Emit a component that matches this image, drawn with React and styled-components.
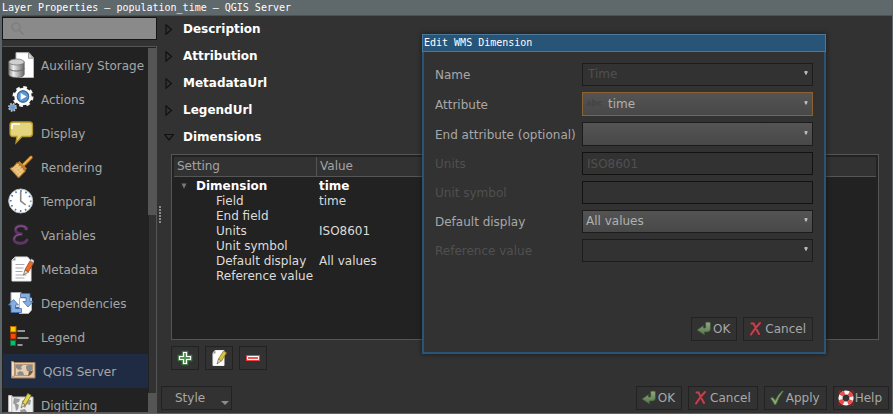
import React from "react";
import styled, { createGlobalStyle, css } from "styled-components";

const Global = createGlobalStyle`
  *, *::before, *::after { box-sizing: border-box; }
  body {
    margin: 0;
    background: #323232;
    color: #a4a4a4;
    font: 12px/15px "DejaVu Sans", sans-serif;
  }
  button, input, select { font: inherit; color: inherit; margin: 0; }
`;

const Window = styled.div`
  position: relative;
  display: flex;
  flex-direction: column;
  height: 100vh;
  min-height: 320px;
  overflow: hidden;
  border: solid #5c6669;
  border-width: 0 1px 1px 2px;
  background: #323232;
`;

const TitleBar = styled.header`
  flex: none;
  height: 16px;
  margin-left: -2px;
  padding-left: 2px;
  background: #5f686b;
  border-bottom: 1px solid #4a5254;
  color: #fff;
  font: 10px/15px "DejaVu Sans Mono", monospace;
  white-space: pre;
`;

const Body = styled.div`
  flex: 1;
  display: flex;
  min-height: 0;
`;

const Sidebar = styled.aside`
  flex: none;
  display: flex;
  flex-direction: column;
  gap: 6px;
  width: 155px;
  padding-top: 1px;
`;

const Search = styled.label`
  flex: none;
  display: flex;
  align-items: center;
  height: 23px;
  padding-left: 8px;
  border: 1px solid #151515;
  background: #8a8a8a;
  input {
    flex: 1;
    min-width: 0;
    padding: 0 4px;
    border: 0;
    outline: 0;
    background: transparent;
    color: #222;
  }
`;

const ListFrame = styled.div`
  flex: 1;
  display: flex;
  min-height: 0;
  padding-top: 1px;
  border: 1px solid #555;
  border-left-color: #222;
  background: #222;
`;

const NavList = styled.nav`
  flex: 1;
  overflow-y: auto;
  scrollbar-width: none;
`;

const NavItem = styled.a`
  display: flex;
  align-items: center;
  gap: 7px;
  height: 34px;
  padding-left: ${(p) => (p.$active ? 7 : 5)}px;
  background: ${(p) => (p.$active ? "#1f2b43" : "transparent")};
  color: #a6a6a6;
  text-decoration: none;
  white-space: nowrap;
  svg { flex: none; }
`;

const Caption = styled.span`
  padding-top: 2px;
`;

const ScrollTrack = styled.div`
  flex: none;
  display: flex;
  flex-direction: column;
  justify-content: space-between;
  width: 8px;
  background: #323232;
  border-left: 1px solid #222;
`;

const ScrollThumb = styled.div`
  height: ${(p) => (p.$end ? "19px" : "46%")};
  margin-left: -1px;
  background: #555;
`;

const Splitter = styled.div`
  flex: none;
  align-self: stretch;
  display: grid;
  place-items: center;
  width: 6px;
`;

const Main = styled.main`
  flex: 1;
  display: flex;
  flex-direction: column;
  min-width: 0;
  padding: 0 3px 3px 0;
`;

const Group = styled.button`
  flex: none;
  display: flex;
  align-items: center;
  gap: 9px;
  height: 27px;
  padding: 0 0 0 1px;
  border: 0;
  background: none;
  color: #fff;
  font-weight: bold;
  text-align: left;
`;

const DimensionPanel = styled.section`
  flex: 1;
  display: flex;
  flex-direction: column;
  gap: 6px;
  min-height: 0;
  padding: 3px 10px 16px 8px;
`;

const TableFrame = styled.div`
  flex: 1;
  min-height: 0;
  overflow: hidden;
  padding: 2px;
  border: 1px solid #555;
  background: #222;
`;

const Table = styled.table`
  width: 100%;
  border-collapse: separate;
  border-spacing: 0;
  table-layout: fixed;
  color: #dcdcdc;
  th {
    height: 20px;
    padding: 0 3px;
    border-bottom: 1px solid #555;
    background: #323232;
    color: #a4a4a4;
    font-weight: normal;
    text-align: left;
  }
  th + th { border-left: 1px solid #555; }
  th:first-child { width: 142px; }
  tbody::before { content: ""; display: block; height: 2px; }
`;

const Cell = styled.td`
  height: 15px;
  padding: 0 0 0 ${(p) => (p.$level ? 42 : 3)}px;
  white-space: nowrap;
  ${(p) => p.$bold && css`color: #fff; font-weight: bold;`}
  svg { margin: 0 9px 2px 4px; vertical-align: middle; }
`;

const ButtonRow = styled.div`
  flex: none;
  display: flex;
  gap: 6px;
  justify-content: ${(p) => (p.$end ? "flex-end" : "flex-start")};
`;

const Footer = styled.footer`
  flex: none;
  display: flex;
  justify-content: space-between;
`;

const Button = styled.button`
  display: flex;
  align-items: center;
  justify-content: center;
  gap: 1px;
  height: 24px;
  padding: 0 6px 0 4px;
  border: 1px solid #222;
  background: #323232;
  color: #a8a8a8;
  white-space: nowrap;
  svg { flex: none; }
`;

const ToolButton = styled(Button)`
  width: 28px;
  padding: 0;
`;

const StyleButton = styled(Button)`
  justify-content: space-between;
  width: 71px;
  margin-left: -2px;
  padding: 0 2px 0 13px;
  svg { align-self: flex-end; margin-bottom: 4px; }
`;

const Dialog = styled.section`
  position: absolute;
  top: 34px;
  left: 420px;
  width: 404px;
  border: 2px solid #285577;
  border-top: 0;
  background: #323232;
  box-shadow: 0 0 5px rgba(0, 0, 0, 0.5);
`;

const DialogTitle = styled.h1`
  height: 18px;
  margin: 0 -2px;
  padding-left: 1px;
  border: 1px solid #4c7899;
  background: #285577;
  color: #fff;
  font: 10px/15px "DejaVu Sans Mono", monospace;
`;

const Form = styled.form`
  display: flex;
  flex-direction: column;
  gap: 6px;
  padding: 11px;
`;

const Field = styled.label`
  display: grid;
  grid-template-columns: 147px 1fr;
  align-items: center;
  height: ${(p) => (p.$tall ? 24 : 23)}px;
  color: ${(p) => (p.$dim ? "#505050" : "#a8a8a8")};
  white-space: nowrap;
`;

const SelectBox = styled.span`
  display: grid;
  align-items: center;
  height: 100%;
  color: ${(p) => (p.$dim ? "#505050" : "#b0b0b0")};
  > * { grid-area: 1 / 1; }
  > svg { pointer-events: none; }
`;

const Select = styled.select`
  appearance: none;
  width: 100%;
  height: 100%;
  padding: 0 16px 0 ${(p) => (p.$icon ? 25 : p.disabled ? 5 : 3)}px;
  border: 1px solid ${(p) => (p.$focus ? "#8c6230" : "#1c1c1c")};
  border-radius: 0;
  outline: 0;
  background: ${(p) => (p.disabled ? "#323232" : "linear-gradient(#545454, #484848)")};
  opacity: 1;
`;

const TextInput = styled.input`
  width: 100%;
  height: 100%;
  padding: 0 4px;
  border: 1px solid #121212;
  border-radius: 0;
  background: #323232;
`;

const Arrow = styled.svg`
  justify-self: end;
  margin-right: 5px;
  margin-bottom: 3px;
`;

const TypeTag = styled.span`
  justify-self: start;
  margin-left: 4px;
  color: #444;
  font-size: 8px;
  font-weight: bold;
  line-height: 12px;
  pointer-events: none;
`;

const DialogButtons = styled(ButtonRow)`
  padding-top: 49px;
`;

/* ---------- icons ---------- */

const Icon26 = ({ children }) => (
  <svg width="26" height="26" viewBox="0 0 26 26" aria-hidden="true">{children}</svg>
);

const StorageIcon = () => (
  <Icon26>
    <defs>
      <linearGradient id="cyl" x1="0" x2="1">
        <stop offset="0" stopColor="#888" /><stop offset=".3" stopColor="#eee" /><stop offset="1" stopColor="#666" />
      </linearGradient>
    </defs>
    <path d="M8 .7h13l4.500 5v19.800H8z" fill="#fff" stroke="#bbb" />
    <path d="M20.500.7v5.500h5z" fill="#d8d8d8" stroke="#888" strokeWidth=".8" />
    <path d="M.8 10v12.500c0 1.700 3.500 3 7.700 3s7.700-1.300 7.700-3V10z" fill="url(#cyl)" stroke="#666" strokeWidth=".8" />
    <ellipse cx="8.500" cy="10" rx="7.700" ry="3" fill="#cfcfcf" stroke="#777" strokeWidth=".8" />
    <path d="M.8 16c0 1.700 3.500 3 7.700 3s7.700-1.300 7.700-3" fill="none" stroke="#666" />
  </Icon26>
);

const ActionsIcon = () => (
  <Icon26>
    <circle cx="15" cy="10.500" r="9" fill="none" stroke="#f4f4f4" strokeWidth="3" strokeDasharray="3.600 3.468" />
    <circle cx="15" cy="10.500" r="7.500" fill="#5a88bd" stroke="#fff" strokeWidth="2.500" />
    <circle cx="15" cy="10.500" r="5.700" fill="#5d93cf" stroke="#37618f" strokeWidth="1" />
    <path d="M12.700 7v7l5.800-3.500z" fill="#fff" />
    <circle cx="4.500" cy="21.300" r="3.500" fill="none" stroke="#ccc" strokeWidth="1.800" strokeDasharray="1.600 1.150" />
    <circle cx="4.500" cy="21.300" r="2.900" fill="#6a9bd1" stroke="#9bb9da" strokeWidth=".8" />
  </Icon26>
);

const DisplayIcon = () => (
  <Icon26>
    <path d="M5 2h16.500q3 0 3 3v8.500q0 3-3 3H14l-6 6.300.9-6.300H5q-3 0-3-3V5q0-3 3-3z" fill="#e2d57e" stroke="#b3962d" strokeWidth="1.300" />
    <path d="M4 9V5.500Q4 4 5.500 4H12" fill="none" stroke="#fff" strokeWidth="1.500" />
  </Icon26>
);

const RenderingIcon = () => (
  <Icon26>
    <path d="M23 3.500L13.500 13" stroke="#a9681a" strokeWidth="3.600" strokeLinecap="round" />
    <path d="M23 3.300L14 12.300" stroke="#f0b24c" strokeWidth="2" strokeLinecap="round" />
    <path d="M9 8.500l8.500 8.500-7 7L2 14.500q4-1 7-6z" fill="#e3b263" stroke="#a9691e" />
    <path d="M10.500 8l7.500 7.500" stroke="#c07d29" strokeWidth="2.600" />
    <path d="M4 15l7-5M6 17l7-5M8 19.500l7-5M10 22l5-5M6 14l7 7M8.500 12l6 6" stroke="#f4d59b" strokeWidth=".8" />
  </Icon26>
);

const TemporalIcon = () => (
  <Icon26>
    <circle cx="12.700" cy="13" r="12" fill="#fff" stroke="#bdbdbd" strokeWidth="1" />
    <circle cx="12.700" cy="13" r="10" fill="none" stroke="#4c7dae" strokeWidth="1.800" strokeDasharray="1.600 3.636" strokeDashoffset=".8" />
    <path d="M12.700 3.500V13l5 4" fill="none" stroke="#858585" strokeWidth="1.600" />
  </Icon26>
);

const VariablesIcon = () => (
  <Icon26>
    <g fill="none" strokeLinecap="round">
      <path d="M18.500 6.500C17 3 8 2.500 7.500 7.500c0 3 3 4.500 7 4.500-5 0-8.500 2-8.500 5 0 5.500 10.500 5.500 13 1" stroke="#603566" strokeWidth="2.800" />
      <path d="M18.500 6C16 3 8 3.500 7.500 7M6 17c.5-3 3-4.500 7-4.700" stroke="#93649a" strokeWidth=".8" />
      <circle cx="18" cy="7" r="1" fill="#704477" stroke="#704477" />
    </g>
  </Icon26>
);

const MetadataIcon = () => (
  <Icon26>
    <path d="M7 1h12.500l3.500 4v20H4V4z" fill="#fff" stroke="#e4e4e4" />
    <path d="M4 4.500L7.500 1v3.500z" fill="#999" />
    <path d="M7.500 8.500h9M7.500 12h8M7.500 15.500h7M7.500 19h11M7.500 22h9" stroke="#aaa" strokeWidth="1" />
    <path d="M15.500 19l1.400-5 3.700 2.200z" fill="#efdcb0" stroke="#444" strokeWidth=".6" />
    <path d="M17 13.600L22 5l3.500 2.200-5 8.600z" fill="#e96d2c" stroke="#a74314" strokeWidth=".8" />
    <path d="M22 5l1.300-2.200 3.200 2-1 2.200z" fill="#ddd" stroke="#777" strokeWidth=".5" />
  </Icon26>
);

const DependenciesIcon = () => (
  <Icon26>
    <path d="M3 2.500h10l2 2V17H3z" fill="#fff" stroke="#aaa" />
    <path d="M11.500 8h12v12l-3 3.500h-9z" fill="#fff" stroke="#bbb" />
    <path d="M12.500 3.500H22v8h3l-5 5.500-5-5.500h3V7.500h-5.500z" fill="#86aee2" stroke="#3f6fae" strokeWidth=".8" />
    <path d="M13.500 22.500H3V15H.5l5-5.500 5 5.500H7.500v3.500h6z" fill="#86aee2" stroke="#3f6fae" strokeWidth=".8" />
  </Icon26>
);

const LegendIcon = () => (
  <Icon26>
    <rect x="2.500" y="2.500" width="5.500" height="5.500" fill="#fcd000" stroke="#b96b00" />
    <rect x="2.500" y="9.500" width="5.500" height="5.500" fill="#fb4b09" stroke="#a12500" />
    <rect x="2.500" y="16.500" width="5" height="5" fill="#0bbd68" stroke="#087340" />
    <path d="M9.500 7h7.500M9.500 14h11M9.500 21h5" stroke="#969696" strokeWidth="2" />
  </Icon26>
);

const ServerIcon = () => (
  <Icon26>
    <path d="M1.500 3.500l2 1H25v15.500H1.500z" fill="#e3c5a3" stroke="#9d7c5a" />
    <path d="M1.500 3.500q2-1 3 1.500V18q-2-.5-3 2z" fill="#f0dcc3" stroke="#a58360" strokeWidth=".8" />
    <path d="M5.500 6.500h17v6l-3.500 5H5.500z" fill="#e9cdac" stroke="#a58a6e" strokeWidth=".8" />
    <path d="M6 7h7l-2 2 1 2-3 1-3-2zM16 8l2-1h4v5l-2 2-3-1-1-3zM7 15l3-2 3 1 1 3H8z" fill="#888c8e" />
    <path d="M18 18l1-4.500 4-.8q-1 4-5 5.300z" fill="#73583f" />
  </Icon26>
);

const DigitizingIcon = () => (
  <Icon26>
    <path d="M.7 3.500h3l1 1.500H25v20H.7z" fill="#ededed" stroke="#bbb" />
    <path d="M.7 3.500h3V20h-3z" fill="#fff" stroke="#aaa" strokeWidth=".7" />
    <path d="M6 6l6 1-1 3-3 1 3 2-1 4-2 2-1-6-2-2zM14 9l4-2 5 1-1 5-3-1-2 4-3-3zM12 18l5-1 2 3-6 1z" fill="#9b9b9b" />
    <path d="M13 16l1.500-5 3 1.700z" fill="#efe2b8" stroke="#555" strokeWidth=".6" />
    <path d="M14.500 11L19.800 1.500l3.200 1.800-5.400 9.500z" fill="#e6d94d" stroke="#8c8232" strokeWidth=".9" />
  </Icon26>
);

const Icon16 = ({ children }) => (
  <svg width="16" height="16" viewBox="0 0 16 16" aria-hidden="true">{children}</svg>
);

const OkIcon = () => (
  <Icon16>
    <defs>
      <linearGradient id="ok" x1="0" y1="0" x2="0" y2="1">
        <stop offset="0" stopColor="#93a982" /><stop offset="1" stopColor="#54764b" />
      </linearGradient>
    </defs>
    <path d="M9.500 1.500Q12 .3 14.500 1.500V8q0 2.700-3 3H8.500V14L1 9l6.500-4.500V7h1.500q.7 0 .7-1z" fill="url(#ok)" stroke="#3e5438" strokeWidth=".8" />
  </Icon16>
);

const CancelIcon = () => (
  <Icon16>
    <path d="M4 2.500h1.500Q8 7.500 11 13M12 2Q7.500 6.500 3 13.500" fill="none" stroke="#5a2227" strokeWidth="3.400" strokeLinecap="round" />
    <path d="M3.500 2.500h2Q8 7.500 11 13M12 2Q7.500 6.500 3 13.500" fill="none" stroke="#b94550" strokeWidth="2" strokeLinecap="round" />
  </Icon16>
);

const ApplyIcon = () => (
  <Icon16>
    <path d="M1.500 8.500l2.200-1.300 2.500 3.300Q8.500 5 13.500.8l.7.500Q9.500 7 7 14.500H5.500Q4 11 1.500 8.500z" fill="#88ac71" stroke="#496840" strokeWidth=".9" />
  </Icon16>
);

const HelpIcon = () => (
  <Icon16>
    <path d="M1 4V1h3M12 1h3v3M15 12v3h-3M4 15H1v-3" fill="none" stroke="#a31919" strokeWidth="1.200" />
    <circle cx="8" cy="8" r="5.500" fill="none" stroke="#f4f4f4" strokeWidth="4.200" />
    <circle cx="8" cy="8" r="5.500" fill="none" stroke="#ea4b4b" strokeWidth="4.200" strokeDasharray="4.320 4.320" strokeDashoffset="-2.160" />
  </Icon16>
);

const AddIcon = () => (
  <Icon16>
    <path d="M6 2h4v4h4v4h-4v4H6v-4H2V6h4z" fill="#4e8e50" stroke="#3f7d42" strokeWidth="2.600" />
    <path d="M6.500 2.500h3v4h4v3h-4v4h-3v-4h-4v-3h4z" fill="#529254" stroke="#fff" strokeWidth="1.200" />
  </Icon16>
);

const EditIcon = () => (
  <Icon16>
    <path d="M4 .5h9v15H2V3z" fill="#fff" stroke="#eee" />
    <path d="M1.500 3.500l3-3v3z" fill="#999" />
    <path d="M6 14l1.500-5 3 1.700z" fill="#eee0b8" stroke="#444" strokeWidth=".6" />
    <path d="M7.500 9l5-8 3 1.800-5 8.200z" fill="#d9c342" stroke="#8b7c2c" strokeWidth=".8" />
  </Icon16>
);

const RemoveIcon = () => (
  <Icon16>
    <path d="M1 5h14v6H1z" fill="#ec4040" />
    <path d="M2.500 6.500h11v3h-11z" fill="#e85858" stroke="#fff" />
  </Icon16>
);

const SearchIcon = () => (
  <svg width="13" height="13" viewBox="0 0 13 13" fill="none" stroke="#7c7c7c" strokeWidth="1.200" aria-hidden="true">
    <circle cx="5" cy="5" r="4" /><path d="M8 8l4.500 4.500" />
  </svg>
);

const Expander = ({ open }) => (
  <svg width="10" height="11" viewBox="0 0 10 11" fill="none" stroke="#111" aria-hidden="true">
    <path d={open ? "M.5 2.500h9L5 8z" : "M2 .8v9.400L7.500 5.500z"} strokeWidth="1.200" />
  </svg>
);

const ComboArrow = () => (
  <Arrow width="4" height="4" viewBox="0 0 4 4" aria-hidden="true">
    <path d="M0 0h4v2H0z" fill="#7c7c7c" />
    <path d="M1 0h2v3H1z" fill="#b8b8b8" />
    <path d="M1 3h2v1H1z" fill="#777" />
  </Arrow>
);

/* ---------- content ---------- */

const NAV = [
  ["Auxiliary Storage", StorageIcon],
  ["Actions", ActionsIcon],
  ["Display", DisplayIcon],
  ["Rendering", RenderingIcon],
  ["Temporal", TemporalIcon],
  ["Variables", VariablesIcon],
  ["Metadata", MetadataIcon],
  ["Dependencies", DependenciesIcon],
  ["Legend", LegendIcon],
  ["QGIS Server", ServerIcon],
  ["Digitizing", DigitizingIcon],
];

const GROUPS = ["Description", "Attribution", "MetadataUrl", "LegendUrl", "Dimensions"];

const SETTINGS = [
  ["Field", "time"],
  ["End field", ""],
  ["Units", "ISO8601"],
  ["Unit symbol", ""],
  ["Default display", "All values"],
  ["Reference value", ""],
];

function Combo({ label, value, disabled, dimLabel, focus, tall, tag }) {
  return (
    <Field $tall={tall} $dim={dimLabel}>
      <Caption>{label}</Caption>
      <SelectBox $dim={disabled}>
        <Select disabled={disabled} $focus={focus} $icon={!!tag} defaultValue={value}>
          <option>{value}</option>
        </Select>
        {tag && <TypeTag>{tag}</TypeTag>}
        <ComboArrow />
      </SelectBox>
    </Field>
  );
}

function TextField({ label, value }) {
  return (
    <Field $dim>
      <Caption>{label}</Caption>
      <TextInput disabled defaultValue={value} />
    </Field>
  );
}

export default function App() {
  return (
    <>
      <Global />
      <Window>
        <TitleBar>Layer Properties — population_time — QGIS Server</TitleBar>
        <Body>
          <Sidebar>
            <Search>
              <SearchIcon />
              <input type="text" aria-label="Search" />
            </Search>
            <ListFrame>
              <NavList>
                {NAV.map(([name, Icon]) => (
                  <NavItem key={name} href="#" $active={name === "QGIS Server"}>
                    <Icon />
                    <Caption>{name}</Caption>
                  </NavItem>
                ))}
              </NavList>
              <ScrollTrack>
                <ScrollThumb />
                <ScrollThumb $end />
              </ScrollTrack>
            </ListFrame>
          </Sidebar>
          <Splitter>
            <svg width="2" height="17" viewBox="0 0 2 17" aria-hidden="true">
              <path d="M1 0v17" stroke="#8c8c8c" strokeWidth="2" strokeDasharray="2 1" />
            </svg>
          </Splitter>
          <Main>
            {GROUPS.map((name) => (
              <Group key={name} type="button" aria-expanded={name === "Dimensions"}>
                <Expander open={name === "Dimensions"} />
                {name}
              </Group>
            ))}
            <DimensionPanel>
              <TableFrame>
                <Table>
                  <thead>
                    <tr><th>Setting</th><th>Value</th></tr>
                  </thead>
                  <tbody>
                    <tr>
                      <Cell $bold>
                        <svg width="6" height="6" viewBox="0 0 6 6" aria-hidden="true">
                          <path d="M.5.5h5L3 5.800z" fill="#777" />
                        </svg>
                        Dimension
                      </Cell>
                      <Cell $bold>time</Cell>
                    </tr>
                    {SETTINGS.map(([name, value]) => (
                      <tr key={name}>
                        <Cell $level={1}>{name}</Cell>
                        <Cell>{value}</Cell>
                      </tr>
                    ))}
                  </tbody>
                </Table>
              </TableFrame>
              <ButtonRow>
                <ToolButton type="button" aria-label="Add dimension"><AddIcon /></ToolButton>
                <ToolButton type="button" aria-label="Edit dimension"><EditIcon /></ToolButton>
                <ToolButton type="button" aria-label="Remove dimension"><RemoveIcon /></ToolButton>
              </ButtonRow>
            </DimensionPanel>
            <Footer>
              <StyleButton type="button">
                Style
                <svg width="8" height="4" viewBox="0 0 8 4" aria-hidden="true">
                  <path d="M0 0h8L4 4z" fill="#8c8c8c" />
                </svg>
              </StyleButton>
              <ButtonRow $end>
                <Button type="button"><OkIcon />OK</Button>
                <Button type="button"><CancelIcon />Cancel</Button>
                <Button type="button"><ApplyIcon />Apply</Button>
                <Button type="button"><HelpIcon />Help</Button>
              </ButtonRow>
            </Footer>
          </Main>
        </Body>

        <Dialog role="dialog" aria-labelledby="dialog-title">
          <DialogTitle id="dialog-title">Edit WMS Dimension</DialogTitle>
          <Form onSubmit={(e) => e.preventDefault()}>
            <Combo label="Name" value="Time" disabled />
            <Combo label="Attribute" value="time" focus tall tag="abc" />
            <Combo label="End attribute (optional)" value="" tall />
            <TextField label="Units" value="ISO8601" />
            <TextField label="Unit symbol" value="" />
            <Combo label="Default display" value="All values" />
            <Combo label="Reference value" value="" disabled dimLabel />
            <DialogButtons $end>
              <Button type="submit"><OkIcon />OK</Button>
              <Button type="button"><CancelIcon />Cancel</Button>
            </DialogButtons>
          </Form>
        </Dialog>
      </Window>
    </>
  );
}
